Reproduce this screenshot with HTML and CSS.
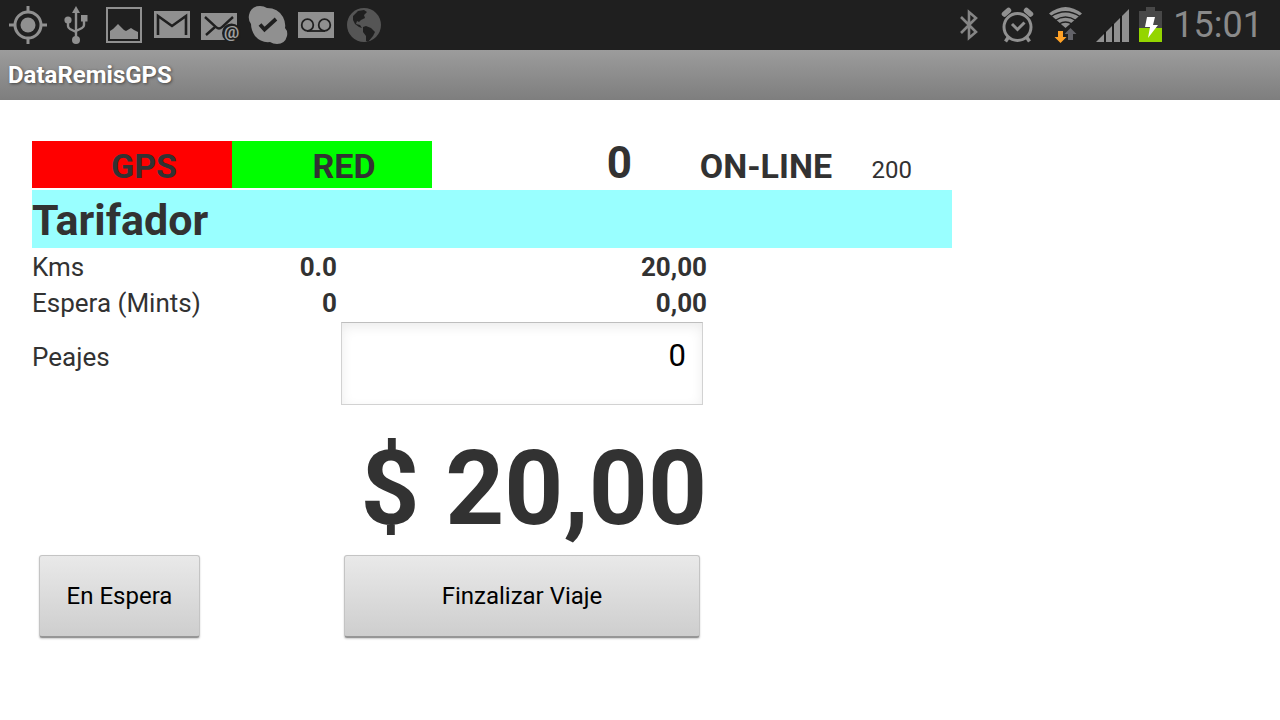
FILE: index.html
```html
<!DOCTYPE html>
<html lang="es">
<head>
<meta charset="utf-8">
<title>DataRemisGPS</title>
<link rel="stylesheet" href="styles.css">
</head>
<body>
<div class="status-bar">
  <div class="status-group">
    <svg class="icon" viewBox="0 0 48 50" aria-hidden="true">
      <circle cx="24" cy="25" r="13" fill="none" stroke="#909090" stroke-width="3"/>
      <circle cx="24" cy="25" r="7.5" fill="#909090"/>
      <path d="M24 6v7M24 37v7M5 25h7M36 25h7" stroke="#909090" stroke-width="3"/>
    </svg>
    <svg class="icon" viewBox="0 0 48 50" aria-hidden="true">
      <path d="M24 10v30M16 21v5q0 2 2 3l6 3M32 20v5q0 2-2 3l-6 3" fill="none" stroke="#909090" stroke-width="2.4"/>
      <path d="M24 6l4 7h-8z" fill="#909090"/>
      <circle cx="16" cy="20" r="3.6" fill="#909090"/>
      <circle cx="24" cy="40" r="4" fill="#909090"/>
      <path d="M29 15h6.500v6.500h-6.500z" fill="#909090"/>
    </svg>
    <svg class="icon" viewBox="0 0 48 50" aria-hidden="true">
      <path d="M7 8h34v34H7z" fill="none" stroke="#909090" stroke-width="2"/>
      <path d="M10 39v-8l3-2 5-5 6 6 2 1 5-3 3 2 4 2v7z" fill="#909090"/>
    </svg>
    <svg class="icon" viewBox="0 0 48 50" aria-hidden="true">
      <path d="M6 11h36v27H6z" fill="#909090"/>
      <path d="M10 35V16l14 10 14-10v19" fill="none" stroke="#1f1f1f" stroke-width="2.600"/>
    </svg>
    <svg class="icon" viewBox="0 0 48 50" aria-hidden="true">
      <path d="M5 13h36v27H5z" fill="#909090"/>
      <path d="M9 17l11 10q3 3 6 0l11-10M10 35l9-8" fill="none" stroke="#1f1f1f" stroke-width="2.400"/>
      <circle cx="35.500" cy="33" r="9.500" fill="#1f1f1f"/>
      <text class="at-sign" x="35.500" y="38" text-anchor="middle" fill="#a0a0a0">@</text>
    </svg>
    <svg class="icon" viewBox="0 0 48 50" aria-hidden="true">
      <path d="M16 6q4 0 7 2 11 0 16 9 3 6 2 11 3 3 2 8-2 8-10 8-4 0-7-2-9 1-15-6-4-6-4-12-3-4-2-9 2-9 11-9z" fill="#909090"/>
      <path d="M16 24.500l4.500 5L32 19" fill="none" stroke="#1f1f1f" stroke-width="3.800"/>
    </svg>
    <svg class="icon" viewBox="0 0 48 50" aria-hidden="true">
      <path d="M6 12h36v26H6z" fill="#909090"/>
      <g fill="none" stroke="#1f1f1f" stroke-width="1.800"><circle cx="15.500" cy="25" r="5.800"/><circle cx="32.500" cy="25" r="5.800"/><path d="M15 31h18"/></g>
    </svg>
    <svg class="icon" viewBox="0 0 48 50" aria-hidden="true">
      <circle cx="24" cy="25" r="17" fill="#555"/>
      <path d="M13 16l5-5 6-1 3 2-3 3 1 3-4 2-2 2-2-1-1 3 4 1 2 3-3-1-4-3-2-4z" fill="#1f1f1f"/>
      <path d="M23 27l3-1 5 2 4 4-2 4-5 6-2-1v-5l-3-4z" fill="#1f1f1f"/>
    </svg>
  </div>
  <div class="status-group">
    <svg class="icon" viewBox="0 0 48 50" aria-hidden="true">
      <path d="M16 17l15 15-7 6V12l7 6-15 15" fill="none" stroke="#858585" stroke-width="2.600"/>
    </svg>
    <svg class="icon" viewBox="0 0 48 50" aria-hidden="true">
      <g fill="none" stroke="#909090" stroke-width="3"><circle cx="24.500" cy="27" r="13.500"/><path d="M19 24l5.500 5.500 7-7"/><path d="M15.500 37l-3 4.500M33.500 37l3 4.500" stroke-width="3.500"/><path d="M11.500 14l4-3.500M37.500 14l-4-3.500" stroke-width="5.500" stroke-linecap="round"/></g>
    </svg>
    <svg class="icon" viewBox="0 0 48 50" aria-hidden="true">
      <path d="M24.500 28L8 13.500q16.500-13 33 0z" fill="#909090"/>
      <path d="M10 16.500q14.500-9.500 29 0M14 20.500q10.500-7 21 0M18 24q6.500-4 13 0" fill="none" stroke="#1f1f1f" stroke-width="1.300"/>
      <path d="M29.500 28l6 6H32v6h-5v-6h-3.500z" fill="#626268"/>
      <path d="M17 31h5v6h3.500l-6 6-6-6H17z" fill="#ffa126"/>
    </svg>
    <svg class="icon icon-signal" viewBox="0 0 44 50" aria-hidden="true">
      <path d="M7 42L40 9v33z" fill="#909090"/>
      <path d="M16 32v10M24 24v18M32 16v26" stroke="#101010" stroke-width="1.800"/>
    </svg>
    <svg class="icon icon-battery" viewBox="0 0 38 50" aria-hidden="true">
      <path d="M6 11h7V7h9v4h7v31H6z" fill="#484848"/>
      <path d="M6 28h23v14H6z" fill="#94d500"/>
      <path d="M14 17h8l-2 8h5l-10 13 2-11h-5z" fill="#fff"/>
    </svg>
    <time class="clock">15:01</time>
  </div>
</div>

<header class="title-bar"><h1 class="title">DataRemisGPS</h1></header>

<main class="content">
  <div class="signals">
    <span class="signal signal-gps">GPS</span>
    <span class="signal signal-net">RED</span>
    <span class="signal-count">0</span>
    <span class="signal-state">ON-LINE</span>
    <span class="signal-code">200</span>
  </div>
  <h2 class="section-title">Tarifador</h2>
  <form class="fare">
    <table class="fare-table">
      <colgroup><col class="col-label"><col class="col-value"><col></colgroup>
      <tbody>
        <tr><th scope="row">Kms</th><td>0.0</td><td>20,00</td></tr>
        <tr><th scope="row">Espera (Mints)</th><td>0</td><td>0,00</td></tr>
        <tr><th scope="row"><label for="peajes">Peajes</label></th><td></td><td class="field-cell"><input class="field" id="peajes" type="text" inputmode="decimal" value="0"></td></tr>
      </tbody>
    </table>
    <output class="total">$ 20,00</output>
    <div class="actions">
      <button class="button" type="button">En Espera</button>
      <button class="button" type="button">Finzalizar Viaje</button>
    </div>
  </form>
</main>
</body>
</html>
```

FILE: styles.css
```css
* {
  box-sizing: border-box;
}

body {
  margin: 0;
  background: #fff;
  color: #323232;
  font-family: Roboto, "Liberation Sans", sans-serif;
}

.status-bar {
  display: flex;
  justify-content: space-between;
  height: 50px;
  padding: 0 17px 0 4px;
  background: #1f1f1f;
}

.status-group {
  display: flex;
}

.icon {
  display: block;
  width: 48px;
  height: 50px;
}

.icon-signal {
  width: 44px;
}

.icon-battery {
  width: 38px;
}

.at-sign {
  font-size: 17px;
  font-weight: 700;
}

.clock {
  padding-left: 2px;
  color: #8a8a8a;
  font-size: 36px;
  font-weight: 400;
  line-height: 50px;
}

.title-bar {
  padding: 0 8px;
  background: linear-gradient(#9c9c9c, #7e7e7e);
}

.title {
  margin: 0;
  color: #fff;
  font-size: 24px;
  font-weight: 700;
  line-height: 50px;
  text-shadow: 1px 1px 3px #444;
}

.content {
  padding: 41px 32px 32px;
}

.signals {
  display: flex;
  align-items: baseline;
  max-width: 920px;
  margin-bottom: 2px;
  font-size: 34px;
  font-weight: 700;
  line-height: 40px;
}

.signal {
  width: 200px;
  padding: 4px 0 0 24px;
  line-height: 43px;
  text-align: center;
}

.signal-gps {
  background: #f00;
}

.signal-net {
  background: #0f0;
}

.signal-count {
  width: 200px;
  font-size: 44px;
  text-align: right;
}

.signal-state {
  width: 200px;
  text-align: right;
}

.signal-code {
  width: 80px;
  font-size: 24px;
  font-weight: 400;
  line-height: 28px;
  text-align: right;
}

.section-title {
  max-width: 920px;
  margin: 0;
  padding: 2px 0 0;
  background: #9ff;
  font-size: 43px;
  font-weight: 700;
  line-height: 56px;
}

.fare {
  max-width: 675px;
  padding-top: 1px;
}

.fare-table {
  width: 100%;
  margin-bottom: 24px;
  border-collapse: collapse;
  table-layout: fixed;
  font-size: 26px;
  line-height: 36px;
}

.col-label {
  width: 200px;
}

.col-value {
  width: 105px;
}

.fare-table th,
.fare-table td {
  padding: 0;
  vertical-align: baseline;
}

.fare-table th {
  font-weight: 400;
  text-align: left;
}

.fare-table td {
  font-weight: 700;
  text-align: right;
}

.fare-table .field-cell {
  padding: 1px 4px 0;
}

.field {
  display: block;
  width: 100%;
  height: 83px;
  padding: 0 16px 16px;
  border: 1px solid #d2d2d2;
  border-top-color: #bebebe;
  background: #fff;
  box-shadow: inset 0 4px 12px #ececec;
  color: #000;
  font-family: inherit;
  font-size: 31px;
  text-align: right;
}

.total {
  display: block;
  font-size: 103px;
  font-weight: 700;
  line-height: 120px;
  text-align: right;
}

.actions {
  display: flex;
  justify-content: space-between;
  padding: 6px 7px;
}

.button {
  width: 161px;
  height: 83px;
  padding: 0;
  border: 1px solid #c4c4c4;
  border-bottom: 2px solid #969696;
  border-radius: 3px;
  background: linear-gradient(#e9e9e9, #cecece);
  box-shadow: 0 1px 2px #ccc;
  color: #000;
  font-family: inherit;
  font-size: 24px;
}

.button:last-child {
  width: 356px;
}
```
